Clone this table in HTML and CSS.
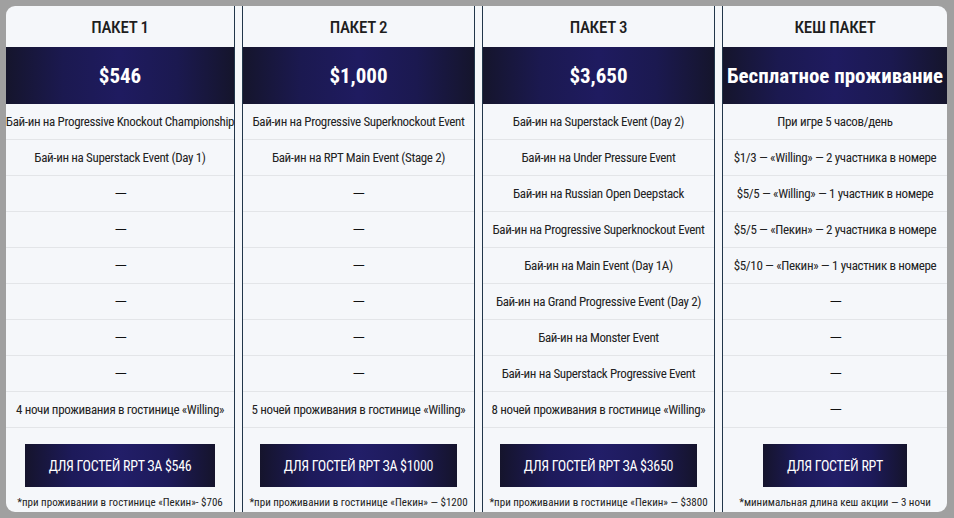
FILE: index.html
```html
<!DOCTYPE html>
<html lang="ru">
<head>
<meta charset="utf-8">
<link rel="stylesheet" href="styles.css">
</head>
<body>
<div class="card">
  <div class="col col-1">
    <div class="title">ПАКЕТ 1</div>
    <div class="price">$546</div>
    <div class="row">Бай-ин на Progressive Knockout Championship</div>
    <div class="row">Бай-ин на Superstack Event (Day 1)</div>
    <div class="row"><span class="dash">—</span></div>
    <div class="row"><span class="dash">—</span></div>
    <div class="row"><span class="dash">—</span></div>
    <div class="row"><span class="dash">—</span></div>
    <div class="row"><span class="dash">—</span></div>
    <div class="row"><span class="dash">—</span></div>
    <div class="row">4 ночи проживания в гостинице «Willing»</div>
    <div class="foot">
      <a class="btn">ДЛЯ ГОСТЕЙ RPT ЗА $546</a>
      <div class="note">*при проживании в гостинице «Пекин»- $706</div>
    </div>
  </div>
  <div class="col col-2">
    <div class="title">ПАКЕТ 2</div>
    <div class="price">$1,000</div>
    <div class="row">Бай-ин на Progressive Superknockout Event</div>
    <div class="row">Бай-ин на RPT Main Event (Stage 2)</div>
    <div class="row"><span class="dash">—</span></div>
    <div class="row"><span class="dash">—</span></div>
    <div class="row"><span class="dash">—</span></div>
    <div class="row"><span class="dash">—</span></div>
    <div class="row"><span class="dash">—</span></div>
    <div class="row"><span class="dash">—</span></div>
    <div class="row">5 ночей проживания в гостинице «Willing»</div>
    <div class="foot">
      <a class="btn">ДЛЯ ГОСТЕЙ RPT ЗА $1000</a>
      <div class="note">*при проживании в гостинице «Пекин» — $1200</div>
    </div>
  </div>
  <div class="col col-3">
    <div class="title">ПАКЕТ 3</div>
    <div class="price">$3,650</div>
    <div class="row">Бай-ин на Superstack Event (Day 2)</div>
    <div class="row">Бай-ин на Under Pressure Event</div>
    <div class="row">Бай-ин на Russian Open Deepstack</div>
    <div class="row">Бай-ин на Progressive Superknockout Event</div>
    <div class="row">Бай-ин на Main Event (Day 1A)</div>
    <div class="row">Бай-ин на Grand Progressive Event (Day 2)</div>
    <div class="row">Бай-ин на Monster Event</div>
    <div class="row">Бай-ин на Superstack Progressive Event</div>
    <div class="row">8 ночей проживания в гостинице «Willing»</div>
    <div class="foot">
      <a class="btn">ДЛЯ ГОСТЕЙ RPT ЗА $3650</a>
      <div class="note">*при проживании в гостинице «Пекин» — $3800</div>
    </div>
  </div>
  <div class="col col-4">
    <div class="title">КЕШ ПАКЕТ</div>
    <div class="price">Бесплатное проживание</div>
    <div class="row">При игре 5 часов/день</div>
    <div class="row">$1/3 — «Willing» — 2 участника в номере</div>
    <div class="row">$5/5 — «Willing» — 1 участник в номере</div>
    <div class="row">$5/5 — «Пекин» — 2 участника в номере</div>
    <div class="row">$5/10 — «Пекин» — 1 участник в номере</div>
    <div class="row"><span class="dash">—</span></div>
    <div class="row"><span class="dash">—</span></div>
    <div class="row"><span class="dash">—</span></div>
    <div class="row"><span class="dash">—</span></div>
    <div class="foot">
      <a class="btn">ДЛЯ ГОСТЕЙ RPT</a>
      <div class="note">*минимальная длина кеш акции — 3 ночи</div>
    </div>
  </div>
</div>
</body>
</html>
```
FILE: styles.css
```css
html, body {
  margin: 0;
  padding: 0;
}
body {
  background: #a0a0a0;
  padding: 6px 7px 6px 6px;
  font-family: "Roboto Condensed", "Liberation Sans", sans-serif;
  color: #222;
}
.card {
  background: #f5f7fa;
  border-radius: 9px;
  height: 506px;
  overflow: hidden;
  display: grid;
  grid-template-columns: 229px 233px 233px 225px;
  column-gap: 7px;
}
.col {
  display: flex;
  flex-direction: column;
  border-left: 1px solid #22364a;
  border-right: 1px solid #22364a;
}
.col-1 { border-left: none; }
.col-4 { border-right: none; }
.title {
  height: 41px;
  display: flex;
  align-items: center;
  justify-content: center;
  font-size: 17px;
  font-weight: 500;
  letter-spacing: -0.3px;
  color: #1e1e1e;
}
.price {
  height: 57px;
  display: flex;
  align-items: center;
  justify-content: center;
  font-size: 21px;
  font-weight: 700;
  color: #fff;
  white-space: nowrap;
  background: linear-gradient(90deg, #15152c 0%, #1b1950 25%, #1f1b60 50%, #1b1950 75%, #15152c 100%);
}
.row {
  height: 35px;
  border-bottom: 1px solid #e3e5e8;
  display: flex;
  align-items: center;
  justify-content: center;
  font-size: 13px;
  letter-spacing: -0.35px;
  white-space: nowrap;
  color: #222;
}
.dash {
  display: inline-block;
  transform: scaleX(1.5);
  color: #111;
}
.foot {
  display: flex;
  flex-direction: column;
  align-items: center;
  padding-top: 16px;
}
.btn {
  height: 43px;
  padding: 0 24px;
  display: flex;
  align-items: center;
  justify-content: center;
  color: #fff;
  font-size: 14px;
  letter-spacing: -0.3px;
  background: linear-gradient(90deg, #15142c 0%, #1d1a5a 25%, #221e68 50%, #1d1a5a 75%, #15142c 100%);
}
.note {
  margin-top: 9px;
  font-size: 11px;
  white-space: nowrap;
  color: #222;
}
```
